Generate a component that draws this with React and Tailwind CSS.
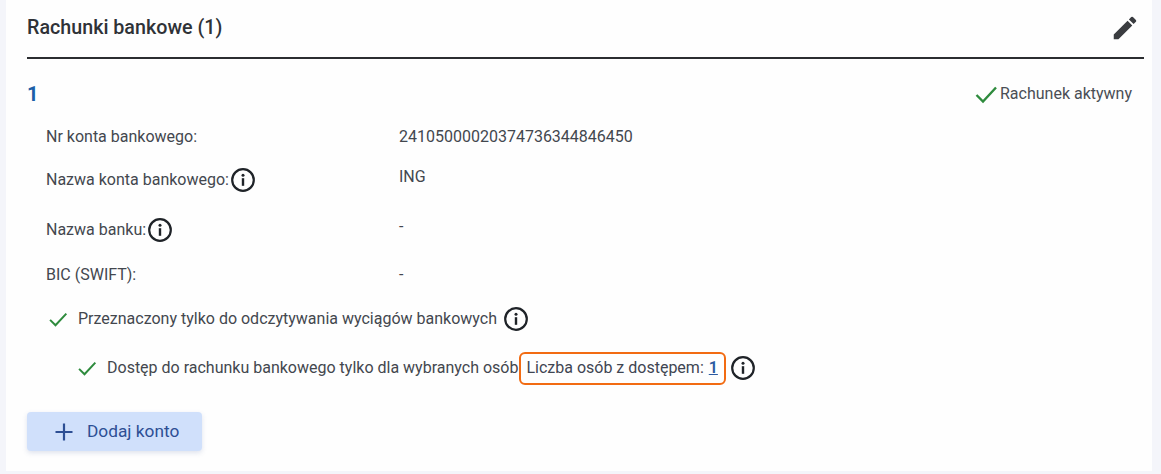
import React from 'react';

const InfoIcon = () => (
    <svg width="26" height="26" viewBox="0 0 26 26" className="shrink-0">
        <circle cx="13" cy="13" r="10.8" fill="none" stroke="#1f2328" strokeWidth="2.2" />
        <circle cx="13" cy="8.3" r="1.5" fill="#1f2328" />
        <rect x="11.8" y="11.2" width="2.4" height="7.6" fill="#1f2328" />
    </svg>
);

const Check = ({ size = 20 }) => (
    <svg width={size} height={size} viewBox="0 0 24 24" className="shrink-0">
        <path d="M2.5 13 L9 19.5 L22 5.5" fill="none" stroke="#2e8b3d" strokeWidth="2.4" />
    </svg>
);

const Row = ({ label, value, info, className }) => (
    <div className={`flex ${className}`}>
        <div className="flex w-[353px] items-center">
            <span>{label}</span>
            {info && <span className="ml-px"><InfoIcon /></span>}
        </div>
        <span className="leading-[20px] text-[#43474e]">{value}</span>
    </div>
);

export default function App() {
    return (
        <div className="h-[474px] overflow-hidden bg-[#f4f5fa] pl-[6px] font-['Roboto',sans-serif] text-[16px] text-[#43474e]">
            <div className="h-[471px] w-[1146px] bg-[#fefefe] pl-[21px]">
                {/* Naglowek */}
                <div className="flex h-[59px] w-[1117px] items-center justify-between border-b-2 border-[#2b2d30] pb-[1px]">
                    <h2 className="text-[19.7px] font-medium text-[#2f3237]">Rachunki bankowe (1)</h2>
                    <svg width="30" height="30" viewBox="0 0 24 24" className="mr-[4px]">
                        <path fill="#3a3c40" d="M3 17.25V21h3.75L17.81 9.94l-3.75-3.75L3 17.25zM20.71 7.04a1 1 0 0 0 0-1.41l-2.34-2.34a1 1 0 0 0-1.41 0l-1.83 1.83 3.75 3.75 1.83-1.83z" />
                    </svg>
                </div>

                <div className="mt-[23px] flex h-[24px] items-center justify-between pr-[20px]">
                    <span className="text-[20px] leading-none font-bold text-[#1c5fa8]">1</span>
                    <span className="flex items-center gap-[2px] text-[#4a4e55]">
                        <Check size={24} />
                        Rachunek aktywny
                    </span>
                </div>

                <div className="pl-[19px]">
                    <Row className="mt-[20px] h-[22px] items-center" label="Nr konta bankowego:" value="24105000020374736344846450" />
                    <Row className="mt-[19px] h-[26px]" label="Nazwa konta bankowego:" value="ING" info />
                    <Row className="mt-[24px] h-[26px]" label="Nazwa banku:" value="-" info />
                    <Row className="mt-[21px] h-[22px] items-center" label="BIC (SWIFT):" value="-" />

                    <div className="mt-[20px] flex h-[26px] items-center pl-[2px]">
                        <Check size={20} />
                        <span className="ml-[10px]">Przeznaczony tylko do odczytywania wyciągów bankowych</span>
                        <span className="ml-[6px]"><InfoIcon /></span>
                    </div>

                    <div className="mt-[19px] flex h-[34px] items-center pl-[31px]">
                        <Check size={20} />
                        <span className="ml-[10px]">Dostęp do rachunku bankowego tylko dla wybranych osób</span>
                        <span className="ml-px flex h-[33px] items-center rounded-[6px] border-[2.5px] border-[#f26b12] pr-[6px] pl-[5px] text-[#3f4552]">
                            Liczba osób z dostępem:
                            <a href="#" className="ml-[5px] font-semibold text-[#2c5aa0] underline">1</a>
                        </span>
                        <span className="ml-[4px]"><InfoIcon /></span>
                    </div>
                </div>

                <button className="mt-[27px] flex h-[39px] w-[175px] items-center rounded-[4px] bg-[#d0e0fb] pl-[27px] text-[17.3px] text-[#2d4f94] shadow-[0_2px_5px_rgba(80,100,160,0.18)]">
                    <svg width="20" height="20" viewBox="0 0 20 20" className="shrink-0">
                        <path d="M10 1.5V18.5M1.5 10H18.5" stroke="#2d4f94" strokeWidth="2.2" />
                    </svg>
                    <span className="ml-[13px]">Dodaj konto</span>
                </button>
            </div>
        </div>
    );
}
